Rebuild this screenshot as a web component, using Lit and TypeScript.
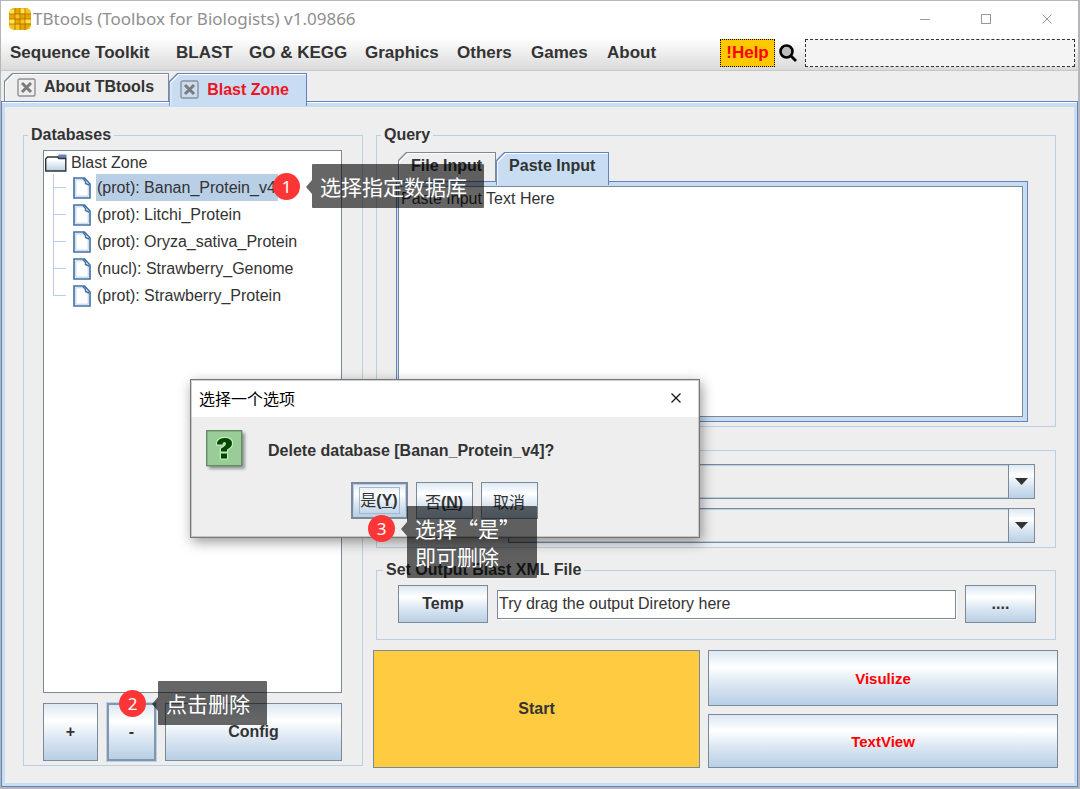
import { LitElement, html, css, svg } from "lit";
import { customElement, state } from "lit/decorators.js";
import { classMap } from "lit/directives/class-map.js";

const MENUS = ["Sequence Toolkit", "BLAST", "GO & KEGG", "Graphics", "Others", "Games", "About"];

const DATABASES = [
  "(prot): Banan_Protein_v4",
  "(prot): Litchi_Protein",
  "(prot): Oryza_sativa_Protein",
  "(nucl): Strawberry_Genome",
  "(prot): Strawberry_Protein",
];

const logo = svg`
  <svg width="22" height="22" viewBox="0 0 22 22" aria-hidden="true">
    <rect width="22" height="22" rx="5" fill="#f6c21c"/>
    <path d="M6 0h5v6H6zM16 6h6v5h-6zM0 6h6v5H0zM6 11h5v5H6zM11 16h5v6h-5zM11 6h5v5h-5zM16 16h6v1l-5 5h-1z" fill="#e9a400"/>
    <path d="M1 2h4v4H1zM11 1h5v4h-5zM1 11h5v5H1zM16 11h5v4h-5z" fill="#ffe34d"/>
    <path d="M6 0v22M11 0v22M16 0v22M0 6h22M0 11h22M0 16h22" stroke="#a87400" stroke-width=".8" fill="none"/>
  </svg>`;

const magnifier = svg`
  <svg width="18" height="18" viewBox="0 0 18 18" aria-hidden="true">
    <circle cx="7.5" cy="7.5" r="6" fill="#bdbdbd" stroke="#000" stroke-width="2.6"/>
    <path d="M12 12l5 5" stroke="#000" stroke-width="2.8"/>
  </svg>`;

const tabClose = svg`
  <svg width="19" height="19" viewBox="0 0 19 19" aria-hidden="true">
    <rect x="1" y="1" width="17" height="17" rx="1.5" fill="none" stroke="#8d9095" stroke-width="1.4"/>
    <path d="M5 5l9 9M14 5l-9 9" stroke="#7b7b7b" stroke-width="3"/>
  </svg>`;

const folder = svg`
  <svg width="22" height="18" viewBox="0 0 22 18" aria-hidden="true">
    <defs>
      <linearGradient id="f" x1="0" y1="0" x2="0" y2="1">
        <stop offset="0.2" stop-color="#fff"/><stop offset="1" stop-color="#b8cfe5"/>
      </linearGradient>
    </defs>
    <path d="M12 3L14 .5H21.500V4.500H12z" fill="#6382bf"/>
    <path d="M.7 17V5L2.500 3H12.500L14 4.500H20.800V17z" fill="url(#f)" stroke="#333" stroke-width="1.4"/>
  </svg>`;

const sheet = svg`
  <svg width="18" height="22" viewBox="0 0 18 22" aria-hidden="true">
    <path d="M1 1H11.500L17 7V21H1z" fill="#fff" stroke="#3f6fa5" stroke-width="1.6"/>
    <path d="M2.800 19.200V2.800H10M2.800 19.200H15.200V8" fill="none" stroke="#b8cfe5" stroke-width="1"/>
    <path d="M10 1.500L12.500 4.500V6.500L16 8" fill="none" stroke="#3f6fa5" stroke-width="1.4"/>
  </svg>`;

const question = svg`
  <svg width="42" height="42" viewBox="0 0 42 42" aria-hidden="true">
    <defs>
      <filter id="s" x="-20%" y="-20%" width="150%" height="150%">
        <feGaussianBlur stdDeviation="1.5"/>
      </filter>
    </defs>
    <rect x="3" y="3" width="36" height="36" fill="#999" filter="url(#s)"/>
    <rect x=".7" y=".7" width="35" height="35" fill="#99cc99" stroke="#5f8f63" stroke-width="1.4"/>
    <path d="M11 14.500Q11 8 18.500 8T26 13.500Q26 17 21 19.500V21.500H15V18.500Q20 16 20 13.800Q20 12 18.300 12T16.500 14.500zM15 23.500H21V28.500H15z"
      fill="#004800" stroke="#c4ecba" stroke-width="2.4" stroke-linejoin="round" paint-order="stroke"/>
  </svg>`;

@customElement("note-callout")
class NoteCallout extends LitElement {
  static properties = { step: {} };
  declare step: string;

  static styles = css`
    :host {
      display: flex;
      align-items: flex-start;
      font-family: "Noto Sans CJK SC", sans-serif;
      color: #fff;
    }
    .step {
      display: grid;
      place-items: center;
      width: 27px;
      height: 27px;
      margin: 9px 6px 0 0;
      border-radius: 50%;
      background: #fc3636;
      font: 17px "Noto Sans", sans-serif;
    }
    .arrow {
      width: 6px;
      height: 14px;
      margin-top: 16px;
      background: rgba(0, 0, 0, 0.6);
      clip-path: polygon(100% 0, 100% 100%, 0 50%);
    }
    .box {
      padding: 8px 17px 8px 8px;
      border-radius: 1px;
      background: rgba(0, 0, 0, 0.6);
      font-size: 21px;
      line-height: 28px;
      white-space: nowrap;
    }
  `;

  render() {
    return html`<span class="step">${this.step}</span><span class="arrow"></span>
      <div class="box"><slot></slot></div>`;
  }
}

@customElement("app-root")
class AppRoot extends LitElement {
  @state() selected = 0;

  static styles = css`
    * {
      box-sizing: border-box;
    }
    :host {
      position: relative;
      box-sizing: border-box;
      display: flex;
      flex-direction: column;
      min-height: 100vh;
      padding: 1px 2px 2px 1px;
      background: #b4b6ba;
      color: #333;
      font-family: "Liberation Sans", Arial, sans-serif;
      font-size: 16px;
    }
    svg {
      display: block;
      flex: none;
    }
    button,
    input,
    textarea,
    select {
      margin: 0;
      color: inherit;
      font: inherit;
      border-radius: 0;
      outline: none;
    }
    button {
      padding: 0;
      border: 0;
      background: none;
      font-weight: bold;
    }

    .title-bar {
      display: flex;
      align-items: center;
      height: 37px;
      padding: 0 15px 2px 8px;
      background: #fff;
      color: #8f8f8f;
    }
    .title {
      flex: 1;
      padding-left: 2px;
      font: 17px "Noto Sans", sans-serif;
    }
    .window-buttons {
      display: flex;
      gap: 29px;
    }
    .window-buttons button {
      display: grid;
      place-items: center;
      width: 32px;
      height: 24px;
    }

    .menu-bar {
      display: flex;
      align-items: center;
      height: 33px;
      padding: 0 3px 2px 9px;
      border-bottom: 1px solid #c6c6c6;
      background: linear-gradient(#fff, #dadada);
      font-size: 17px;
    }
    .menus {
      flex: 1;
      display: grid;
      grid-template-columns: 166px 73px 116px 92px 74px 76px auto;
      justify-items: start;
      justify-content: start;
    }
    .help {
      width: 55px;
      height: 28px;
      border: 1px dotted #000;
      background: #ffc800;
      color: #f00;
    }
    .search-icon {
      margin: 0 8px 0 4px;
    }
    .search {
      flex: 0 0 270px;
      min-width: 0;
      height: 28px;
      border: 1px dashed #333;
      background: #f4f4f4;
    }

    .tabs {
      position: relative;
      z-index: 1;
      display: flex;
      align-items: flex-end;
    }
    .tab {
      position: relative;
      isolation: isolate;
      display: flex;
      align-items: center;
      gap: 8px;
      background: #7a8a99;
    }
    .tab,
    .tab::before,
    .tab::after {
      clip-path: polygon(8px 0, 100% 0, 100% 100%, 0 100%, 0 8px);
    }
    .tab::before,
    .tab::after {
      content: "";
      position: absolute;
      z-index: -1;
      inset: 1px 1px 0 1px;
      background: #fff;
    }
    .tab::after {
      inset: 2px 1px 0 2px;
      background: #eee;
    }
    .tab.on {
      background: #6382bf;
    }
    .tab.on::after {
      background: #c8ddf2;
    }
    .main-tabs {
      padding: 2px 0 0 3px;
      background: #eee;
    }
    .main-tabs .tab {
      height: 28px;
      padding: 0 15px 0 13px;
    }
    .main-tabs .on {
      height: 33px;
      margin-bottom: -5px;
      padding: 0 18px 0 11px;
      color: #f01420;
    }

    .pane {
      flex: 1;
      display: grid;
      grid-template-columns: 340px 1fr;
      column-gap: 10px;
      padding: 23px 19px 18px 21px;
      border: 1px solid #6382bf;
      box-shadow: inset 0 1px #fff, inset 0 0 0 3px #c8ddf2, inset 0 5px #c8ddf2;
      background: #eee;
    }
    fieldset {
      min-width: 0;
      margin: 0;
      padding: 0;
      border: 1px solid #b8cfe5;
    }
    legend {
      margin-left: -15px;
      padding: 0 3px;
      font-weight: bold;
      line-height: 20px;
    }

    .btn {
      border: 1px solid #7a8a99;
      background: linear-gradient(#dde8f3, #fff 30%, #dde8f3 60%, #b8cfe5);
    }

    .databases {
      display: flex;
      flex-direction: column;
      margin-bottom: 2px;
      padding: 5px 20px 4px 19px;
    }
    .tree {
      flex: 1;
      border: 1px solid #7a8a99;
      background: #fff;
    }
    .root {
      display: flex;
      align-items: center;
      gap: 4px;
      height: 23px;
      padding-left: 1px;
    }
    .nodes {
      margin: 0;
      padding: 0 0 0 9px;
      list-style: none;
    }
    .node {
      display: flex;
      align-items: center;
      height: 27px;
      background: linear-gradient(#b8cfe5, #b8cfe5) 0 0 / 1px 100% no-repeat;
    }
    .node:last-child {
      background-size: 1px 50%;
    }
    .node::before {
      content: "";
      width: 13px;
      height: 1px;
      margin-right: 7px;
      background: #b8cfe5;
    }
    .name {
      height: 27px;
      margin-left: 5px;
      padding: 0 2px 0 1px;
      font-weight: normal;
    }
    .name.on {
      background: #b8cfe5;
    }
    .db-actions {
      display: grid;
      grid-template-columns: 55px 49px 1fr;
      gap: 9px;
      height: 58px;
      margin-top: 10px;
    }
    .held {
      border: 2px solid #8296ac;
      box-shadow: 0 0 0 1px #b8cfe5;
    }

    .work {
      display: flex;
      flex-direction: column;
      min-width: 0;
    }
    .work fieldset {
      margin: 0 2px 0 3px;
    }
    .query {
      flex: 1;
      display: flex;
      flex-direction: column;
      padding: 7px 27px 4px 19px;
    }
    .input-tabs {
      padding-left: 2px;
    }
    .input-tabs .tab {
      height: 29px;
      padding: 0 14px 2px 13px;
    }
    .input-tabs .on {
      height: 33px;
      margin-bottom: -4px;
      padding: 0 14px 6px 13px;
    }
    .input-panel {
      flex: 1;
      display: flex;
      padding: 4px 4px 4px 1px;
      border: 1px solid #6382bf;
      background: #c8ddf2;
    }
    .input-panel textarea {
      flex: 1;
      padding: 3px 2px;
      border: 1px solid #7a8a99;
      background: #fff;
      resize: none;
    }
    .work .options {
      display: grid;
      gap: 9px;
      margin-top: 23px;
      padding: 13px 20px 4px 131px;
    }
    .combo {
      position: relative;
      display: flex;
      height: 35px;
    }
    .combo select {
      flex: 1;
      appearance: none;
      padding: 0 34px 0 6px;
      border: 1px solid #7a8a99;
      box-shadow: inset 0 0 0 1px #b8cfe5;
      background: #eee;
    }
    .combo-arrow {
      position: absolute;
      inset: 0 0 0 auto;
      display: grid;
      place-items: center;
      width: 27px;
      pointer-events: none;
    }
    .work .output {
      display: grid;
      grid-template-columns: 90px 1fr 71px;
      gap: 9px;
      align-items: center;
      margin-top: 12px;
      padding: 5px 19px 16px 21px;
    }
    .output .btn {
      height: 38px;
    }
    .output input {
      width: 100%;
      height: 29px;
      padding: 0 1px;
      border: 1px solid #7a8a99;
      box-shadow: 1px 1px #fff;
      background: #fff;
    }
    .run {
      display: grid;
      grid-template-columns: 327fr 350fr;
      grid-template-rows: 56px 54px;
      gap: 8px;
      margin-top: 10px;
    }
    .start {
      grid-row: span 2;
      background: #ffcc41;
    }
    .view {
      color: #f00;
      font-size: 15px;
    }

    .dialog {
      position: absolute;
      z-index: 2;
      left: 190px;
      top: 379px;
      width: 510px;
      border: 1px solid #777;
      outline: 1px solid rgba(120, 120, 120, 0.35);
      outline-offset: -2px;
      background: #eee;
      box-shadow: 2px 4px 12px rgba(0, 0, 0, 0.4);
    }
    .dialog-title {
      display: flex;
      align-items: center;
      justify-content: space-between;
      height: 37px;
      padding: 0 18px 2px 8px;
      background: #fff;
      color: #000;
      font-family: "Noto Sans CJK SC", sans-serif;
    }
    .message {
      display: flex;
      align-items: center;
      gap: 20px;
      padding: 13px 0 0 15px;
      font-weight: bold;
    }
    .message p {
      margin: 0;
    }
    .choices {
      display: flex;
      justify-content: center;
      gap: 8px;
      padding: 10px 2px 18px 0;
    }
    .choices .btn {
      width: 57px;
      height: 37px;
      font-family: "Liberation Sans", "Noto Sans CJK SC", sans-serif;
      white-space: nowrap;
    }
    .choices .cjk {
      font-weight: normal;
    }
    .choices .focus {
      border: 2px solid #7a8a99;
      box-shadow: inset 0 0 0 1px #b8cfe5;
    }
    .focus .ring {
      display: block;
      margin: 0 6px;
      border: 1px solid #a3b8cc;
      line-height: 25px;
    }
    .note {
      position: absolute;
      z-index: 3;
    }
    .note-select {
      left: 273px;
      top: 164px;
    }
    .note-delete {
      left: 119px;
      top: 681px;
    }
    .note-confirm {
      left: 368px;
      top: 506px;
    }
  `;

  private combo(label: string) {
    return html`<div class="combo">
      <select aria-label=${label}></select>
      <span class="combo-arrow btn">
        <svg width="13" height="7" viewBox="0 0 13 7"><path d="M0 0h13L6.500 7z" fill="#333" /></svg>
      </span>
    </div>`;
  }

  render() {
    return html`
      <header class="title-bar">
        ${logo}
        <span class="title">TBtools (Toolbox for Biologists) v1.09866</span>
        <div class="window-buttons">
          <button aria-label="Minimize">
            <svg width="10" height="10"><path d="M0 5.500h10" stroke="#999" /></svg>
          </button>
          <button aria-label="Maximize">
            <svg width="10" height="10"><rect x=".5" y=".5" width="9" height="9" fill="none" stroke="#999" /></svg>
          </button>
          <button aria-label="Close">
            <svg width="10" height="10"><path d="M.5 .5l9 9M9.500 .5l-9 9" stroke="#999" /></svg>
          </button>
        </div>
      </header>

      <div class="menu-bar">
        <nav class="menus">${MENUS.map((m) => html`<button>${m}</button>`)}</nav>
        <button class="help">!Help</button>
        <label class="search-icon" for="search">${magnifier}</label>
        <input class="search" id="search" type="text" aria-label="Search" />
      </div>

      <div class="tabs main-tabs">
        <button class="tab">${tabClose}<span>About TBtools</span></button>
        <button class="tab on">${tabClose}<span>Blast Zone</span></button>
      </div>

      <main class="pane">
        <fieldset class="databases">
          <legend>Databases</legend>
          <div class="tree">
            <div class="root">${folder}<span>Blast Zone</span></div>
            <ul class="nodes">
              ${DATABASES.map(
                (name, i) => html`<li class="node">
                  ${sheet}
                  <button class=${classMap({ name: true, on: i === this.selected })}
                    @click=${() => (this.selected = i)}>${name}</button>
                </li>`
              )}
            </ul>
          </div>
          <div class="db-actions">
            <button class="btn">+</button>
            <button class="btn held">-</button>
            <button class="btn">Config</button>
          </div>
        </fieldset>

        <div class="work">
          <fieldset class="query">
            <legend>Query</legend>
            <div class="tabs input-tabs">
              <button class="tab">File Input</button>
              <button class="tab on">Paste Input</button>
            </div>
            <div class="input-panel">
              <textarea aria-label="Paste Input" .value=${"Paste Input Text Here"}></textarea>
            </div>
          </fieldset>

          <fieldset class="options">${this.combo("Blast type")}${this.combo("Output format")}</fieldset>

          <fieldset class="output">
            <legend>Set Output Blast XML File</legend>
            <button class="btn">Temp</button>
            <input type="text" aria-label="Output file" .value=${"Try drag the output Diretory here"} />
            <button class="btn">....</button>
          </fieldset>

          <div class="run">
            <button class="btn start">Start</button>
            <button class="btn view">Visulize</button>
            <button class="btn view">TextView</button>
          </div>
        </div>
      </main>

      <section class="dialog" role="dialog" aria-labelledby="dialog-title">
        <div class="dialog-title">
          <span id="dialog-title" lang="zh-CN">选择一个选项</span>
          <button aria-label="Close dialog">
            <svg width="10" height="10"><path d="M.5 .5l9 9M9.500 .5l-9 9" stroke="#111" stroke-width="1.2" /></svg>
          </button>
        </div>
        <div class="message">
          ${question}
          <p>Delete database [Banan_Protein_v4]?</p>
        </div>
        <div class="choices" lang="zh-CN">
          <button class="btn focus"><span class="ring"><span class="cjk">是</span>(<u>Y</u>)</span></button>
          <button class="btn"><span class="cjk">否</span>(<u>N</u>)</button>
          <button class="btn"><span class="cjk">取消</span></button>
        </div>
      </section>

      <note-callout class="note note-select" step="1" lang="zh-CN">选择指定数据库</note-callout>
      <note-callout class="note note-delete" step="2" lang="zh-CN">点击删除</note-callout>
      <note-callout class="note note-confirm" step="3" lang="zh-CN">选择“是”<br />即可删除</note-callout>
    `;
  }
}
